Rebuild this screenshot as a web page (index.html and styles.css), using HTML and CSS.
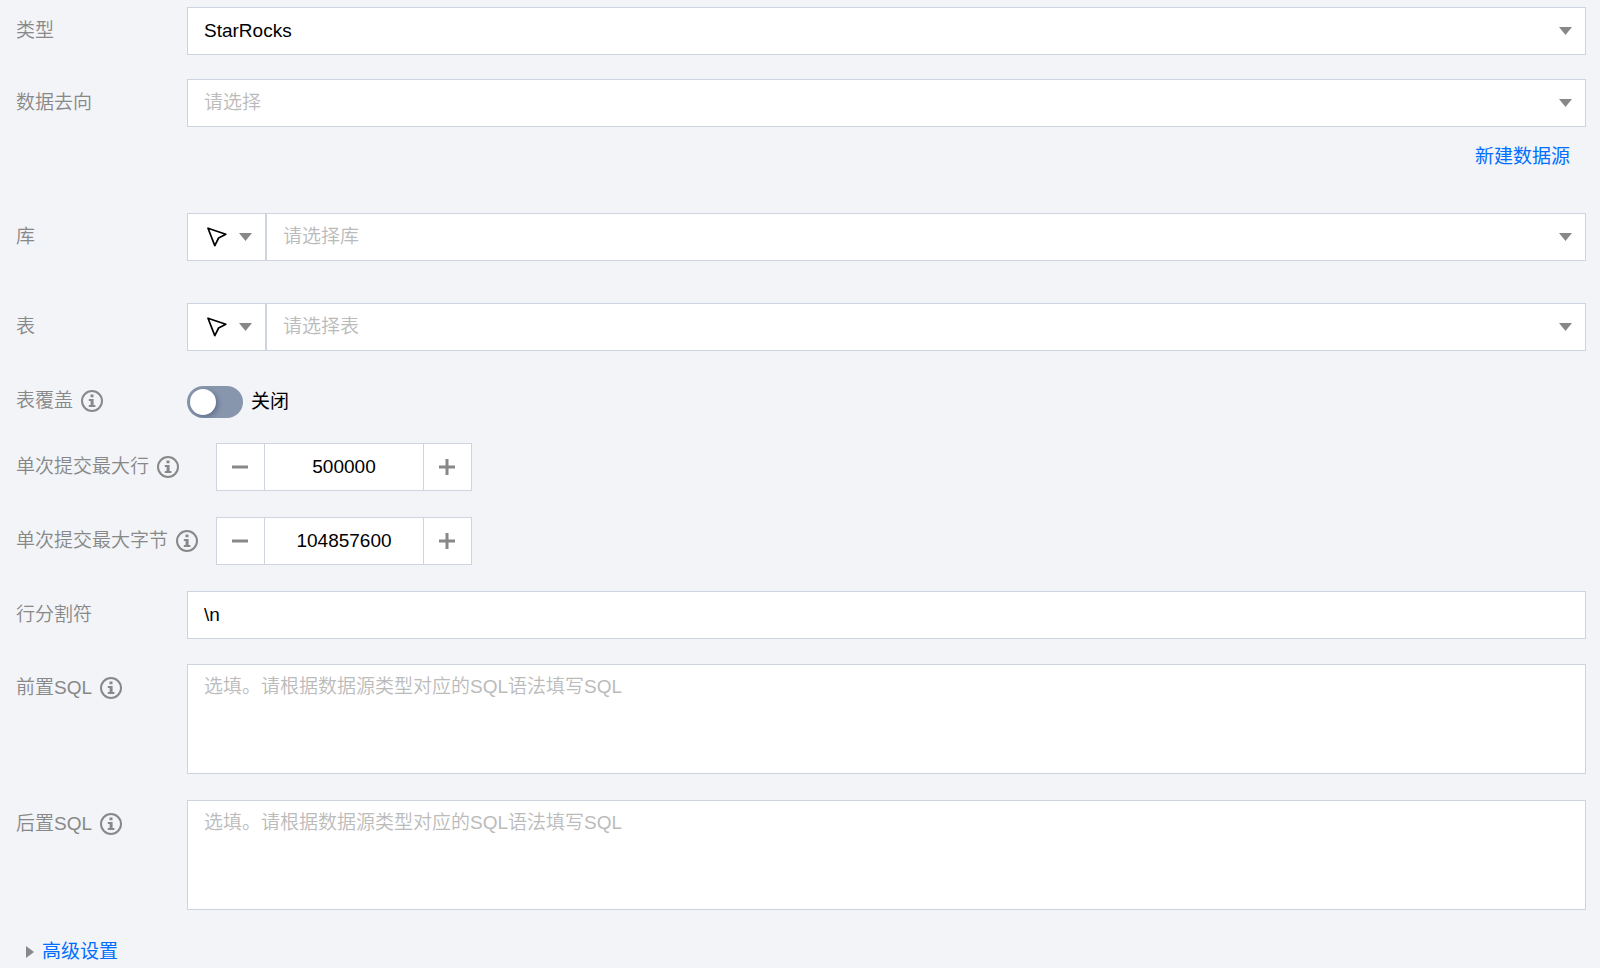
FILE: index.html
```html
<!DOCTYPE html>
<html lang="zh-CN">
<head>
<meta charset="utf-8">
<meta name="viewport" content="width=device-width, initial-scale=1">
<title>数据去向</title>
<link rel="stylesheet" href="styles.css">
</head>
<body>
<svg class="sprite" aria-hidden="true">
  <symbol id="caret" viewBox="0 0 13 8"><path d="M0 0h13L6.5 8z" fill="#888"/></symbol>
  <symbol id="info" viewBox="0 0 24 24">
    <circle cx="12" cy="12" r="10" fill="none" stroke="#888" stroke-width="2"/>
    <path d="M10.500 5.500h3v2.800h-3zM8.800 10h4.800v6h1.800v2H8.800v-2h1.800v-4H8.800z" fill="#888"/>
  </symbol>
  <symbol id="cursor" viewBox="0 0 20 20">
    <path d="M1 1.200 18.800 7.300 11.600 11 7.800 18.600z" fill="none" stroke="#000" stroke-width="1.700" stroke-linejoin="round"/>
  </symbol>
  <symbol id="minus" viewBox="0 0 16 16"><path d="M0 6.500h16v3H0z" fill="#888"/></symbol>
  <symbol id="plus" viewBox="0 0 16 16"><path d="M0 6.500h6.500V0h3v6.500H16v3H9.500V16h-3V9.500H0z" fill="#888"/></symbol>
</svg>
<form class="form">
  <div class="row row-type">
    <label class="label" for="type">类型</label>
    <div class="picker">
      <select class="control" id="type"><option>StarRocks</option></select>
      <svg class="caret"><use href="#caret"/></svg>
    </div>
  </div>
  <div class="row row-target">
    <label class="label" for="target">数据去向</label>
    <div class="picker">
      <select class="control empty" id="target"><option>请选择</option></select>
      <svg class="caret"><use href="#caret"/></svg>
    </div>
  </div>
  <div class="create"><a class="link" href="#new">新建数据源</a></div>
  <div class="row row-database">
    <label class="label" for="database">库</label>
    <div class="group">
      <button class="mode" type="button" aria-label="库选择方式"><svg class="cursor"><use href="#cursor"/></svg><svg class="caret-icon"><use href="#caret"/></svg></button>
      <div class="picker">
        <select class="control empty" id="database"><option>请选择库</option></select>
        <svg class="caret"><use href="#caret"/></svg>
      </div>
    </div>
  </div>
  <div class="row row-table">
    <label class="label" for="table">表</label>
    <div class="group">
      <button class="mode" type="button" aria-label="表选择方式"><svg class="cursor"><use href="#cursor"/></svg><svg class="caret-icon"><use href="#caret"/></svg></button>
      <div class="picker">
        <select class="control empty" id="table"><option>请选择表</option></select>
        <svg class="caret"><use href="#caret"/></svg>
      </div>
    </div>
  </div>
  <div class="row">
    <label class="label label-short" for="overwrite">表覆盖<svg class="info"><use href="#info"/></svg></label>
    <div class="toggle"><input class="switch" type="checkbox" role="switch" id="overwrite"><span>关闭</span></div>
  </div>
  <div class="row row-wide">
    <label class="label" for="max-rows">单次提交最大行<svg class="info"><use href="#info"/></svg></label>
    <div class="stepper">
      <button class="step" type="button" aria-label="减少"><svg class="sign"><use href="#minus"/></svg></button>
      <input class="number" id="max-rows" type="text" inputmode="numeric" value="500000">
      <button class="step" type="button" aria-label="增加"><svg class="sign"><use href="#plus"/></svg></button>
    </div>
  </div>
  <div class="row row-wide">
    <label class="label" for="max-bytes">单次提交最大字节<svg class="info"><use href="#info"/></svg></label>
    <div class="stepper">
      <button class="step" type="button" aria-label="减少"><svg class="sign"><use href="#minus"/></svg></button>
      <input class="number" id="max-bytes" type="text" inputmode="numeric" value="104857600">
      <button class="step" type="button" aria-label="增加"><svg class="sign"><use href="#plus"/></svg></button>
    </div>
  </div>
  <div class="row">
    <label class="label" for="separator">行分割符</label>
    <input class="control" id="separator" type="text" value="\n">
  </div>
  <div class="row row-sql">
    <label class="label" for="pre-sql">前置SQL<svg class="info"><use href="#info"/></svg></label>
    <textarea class="control area" id="pre-sql" placeholder="选填。请根据数据源类型对应的SQL语法填写SQL"></textarea>
  </div>
  <div class="row row-sql">
    <label class="label" for="post-sql">后置SQL<svg class="info"><use href="#info"/></svg></label>
    <textarea class="control area" id="post-sql" placeholder="选填。请根据数据源类型对应的SQL语法填写SQL"></textarea>
  </div>
  <button class="advanced" type="button"><svg class="arrow" viewBox="0 0 8 12"><path d="M0 0l8 6-8 6z" fill="#888"/></svg>高级设置</button>
</form>
</body>
</html>
```
FILE: styles.css
```css
* {
  box-sizing: border-box;
}

body {
  margin: 0;
  background: #f2f4f8;
  color: #000;
}

body,
button,
input,
select,
textarea {
  font-family: "Liberation Sans", "Noto Sans CJK SC", sans-serif;
  font-size: 19px;
  font-weight: 350;
  line-height: 24px;
}

button,
input,
select,
textarea {
  margin: 0;
  border-radius: 0;
}

.sprite {
  display: none;
}

.form {
  padding: 7px 14px 0 16px;
}

.row {
  display: grid;
  grid-template-columns: 171px minmax(0, 1fr);
  align-items: start;
  margin-bottom: 25px;
}

.row-type {
  margin-bottom: 24px;
}

.row-target {
  margin-bottom: 18px;
}

.row-wide {
  grid-template-columns: 200px minmax(0, 1fr);
  margin-bottom: 26px;
}

.row-database {
  margin-bottom: 42px;
}

.row-table {
  margin-bottom: 35px;
}

.row-sql {
  margin-bottom: 26px;
}

.label {
  display: flex;
  align-items: center;
  gap: 7px;
  height: 48px;
  color: #888;
  white-space: nowrap;
}

.label-short {
  height: 30px;
}

.info {
  width: 24px;
  height: 24px;
}

.picker {
  display: grid;
  align-items: center;
}

.picker > * {
  grid-area: 1 / 1;
}

.caret,
.caret-icon {
  width: 13px;
  height: 8px;
}

.caret {
  justify-self: end;
  margin-right: 14px;
  pointer-events: none;
}

.control {
  appearance: none;
  display: block;
  width: 100%;
  height: 48px;
  padding: 0 16px;
  border: 1px solid #cdd4df;
  background: #fff;
  color: #000;
}

.empty,
.control::placeholder {
  color: #bbb;
  opacity: 1;
}

.area {
  height: 110px;
  padding: 10px 16px;
  resize: none;
}

.create {
  display: flex;
  justify-content: flex-end;
  padding: 0 16px 44px 0;
}

.link {
  color: #006eff;
  font-weight: 400;
  text-decoration: none;
}

.group {
  display: grid;
  grid-template-columns: 79px minmax(0, 1fr);
}

.mode {
  display: flex;
  align-items: center;
  justify-content: space-between;
  padding: 0 13px 0 19px;
  border: 1px solid #cdd4df;
  background: #fff;
}

.cursor {
  width: 20px;
  height: 20px;
}

.toggle {
  display: flex;
  align-items: center;
  gap: 8px;
  font-weight: 400;
}

.switch {
  appearance: none;
  display: flex;
  width: 56px;
  height: 32px;
  padding: 3px;
  border-radius: 16px;
  background: #8796ad;
  overflow: hidden;
}

.switch::before {
  content: "";
  width: 26px;
  height: 26px;
  border-radius: 50%;
  background: #fff;
  box-shadow: 2px 2px 5px rgba(0, 20, 60, 0.3);
}

.stepper {
  display: flex;
  width: 256px;
  height: 48px;
  border: 1px solid #cdd4df;
  background: #fff;
}

.step {
  display: flex;
  flex: 0 0 47px;
  align-items: center;
  justify-content: center;
  padding: 0 1px 0 0;
  border: 0;
  background: none;
}

.sign {
  width: 16px;
  height: 16px;
}

.number {
  flex: 1;
  min-width: 0;
  padding: 0;
  border: solid #cdd4df;
  border-width: 0 1px;
  background: none;
  color: #000;
  text-align: center;
}

.advanced {
  display: flex;
  align-items: center;
  gap: 8px;
  padding: 4px 10px;
  border: 0;
  background: none;
  color: #006eff;
  font-weight: 400;
}

.arrow {
  width: 8px;
  height: 12px;
}
```
